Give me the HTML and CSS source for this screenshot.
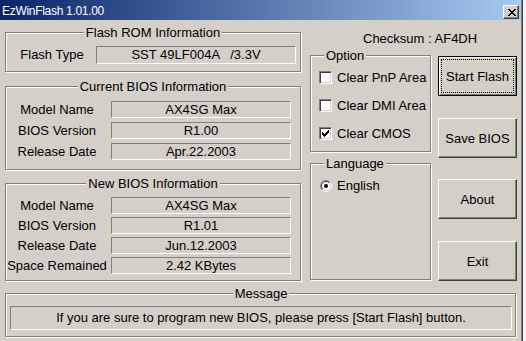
FILE: index.html
```html
<!DOCTYPE html>
<html>
<head>
<meta charset="utf-8">
<title>EzWinFlash 1.01.00</title>
<link rel="stylesheet" href="styles.css">
</head>
<body>
<div class="window">
  <div class="titlebar">
    <span class="title">EzWinFlash 1.01.00</span>
    <span class="close"><svg width="8" height="7" viewBox="0 0 8 7" shape-rendering="crispEdges"><path fill="#000" d="M0 0h2v1H0zM6 0h2v1H6zM1 1h2v1H1zM5 1h2v1H5zM2 2h4v1H2zM3 3h2v1H3zM2 4h4v1H2zM1 5h2v1H1zM5 5h2v1H5zM0 6h2v1H0zM6 6h2v1H6z"/></svg></span>
  </div>
  <div class="client">
    <div class="main">
      <div class="col-left">
        <div class="group g-rom">
          <div class="legend">Flash ROM Information</div>
          <div class="rom-row">
            <span class="rom-label">Flash Type</span>
            <span class="field rom-field">SST 49LF004A   /3.3V</span>
          </div>
        </div>
        <div class="group g-cur">
          <div class="legend">Current BIOS Information</div>
          <div class="info-grid">
            <span class="label">Model Name</span><span class="field">AX4SG Max</span>
            <span class="label">BIOS Version</span><span class="field">R1.00</span>
            <span class="label">Release Date</span><span class="field">Apr.22.2003</span>
          </div>
        </div>
        <div class="group g-new">
          <div class="legend">New BIOS Information</div>
          <div class="info-grid">
            <span class="label">Model Name</span><span class="field">AX4SG Max</span>
            <span class="label">BIOS Version</span><span class="field">R1.01</span>
            <span class="label">Release Date</span><span class="field">Jun.12.2003</span>
            <span class="label">Space Remained</span><span class="field">2.42 KBytes</span>
          </div>
        </div>
      </div>
      <div class="col-side">
        <div class="checksum">Checksum : AF4DH</div>
        <div class="side-row">
          <div class="col-mid">
            <div class="group g-opt">
              <div class="legend left">Option</div>
              <div class="checks">
                <div class="check-row"><span class="cbox"></span><span>Clear PnP Area</span></div>
                <div class="check-row"><span class="cbox"></span><span>Clear DMI Area</span></div>
                <div class="check-row"><span class="cbox"><svg width="7" height="7" viewBox="0 0 7 7" shape-rendering="crispEdges"><path fill="#000" d="M6 0h1v1H6zM5 1h2v1H5zM0 2h1v1H0zM4 2h3v1H4zM0 3h2v1H0zM3 3h3v1H3zM0 4h5v1H0zM1 5h3v1H1zM2 6h1v1H2z"/></svg></span><span>Clear CMOS</span></div>
              </div>
            </div>
            <div class="group g-lang">
              <div class="legend left">Language</div>
              <div class="check-row lang-row">
                <span class="radio"><svg width="12" height="12" viewBox="0 0 12 12">
                  <defs>
                    <clipPath id="tl"><polygon points="0,12 0,0 12,0"/></clipPath>
                    <clipPath id="br"><polygon points="12,0 12,12 0,12"/></clipPath>
                  </defs>
                  <circle cx="6" cy="6" r="5.5" fill="none" stroke="#808080" clip-path="url(#tl)"/>
                  <circle cx="6" cy="6" r="5.5" fill="none" stroke="#ffffff" clip-path="url(#br)"/>
                  <circle cx="6" cy="6" r="4.5" fill="#fff" stroke="#404040" clip-path="url(#tl)"/>
                  <circle cx="6" cy="6" r="4.5" fill="#fff" stroke="#d4d0c8" clip-path="url(#br)"/>
                  <circle cx="6" cy="6" r="2" fill="#000"/>
                </svg></span>
                <span>English</span>
              </div>
            </div>
          </div>
          <div class="col-btn">
            <div class="btn btn-default">Start Flash</div>
            <div class="btn btn-save">Save BIOS</div>
            <div class="btn btn-about">About</div>
            <div class="btn btn-exit">Exit</div>
          </div>
        </div>
      </div>
    </div>
    <div class="group g-msg">
      <div class="legend">Message</div>
      <div class="field msg-field">If you are sure to program new BIOS, please press [Start Flash] button.</div>
    </div>
  </div>
</div>
</body>
</html>
```
FILE: styles.css
```css
body {
  margin: 0;
  background: #f4f4f4;
  font-family: "Liberation Sans", Arial, sans-serif;
  font-size: 13px;
  color: #000;
}

.window {
  width: 521px;
  height: 341px;
  background: #d4d0c8;
  border-right: 1px solid #808080;
  box-shadow: 1px 0 0 #404040;
  overflow: hidden;
}

.titlebar {
  height: 20px;
  display: flex;
  background: linear-gradient(90deg, #0a246a, #a6caf0);
  color: #fff;
}

.title {
  font-size: 12px;
  line-height: 18px;
  padding: 2px 0 0 2px;
  letter-spacing: -0.3px;
  white-space: nowrap;
}

.close {
  margin: 5px 2px 0 auto;
  width: 16px;
  height: 14px;
  box-sizing: border-box;
  background: #d4d0c8;
  border: 1px solid;
  border-color: #fff #404040 #404040 #fff;
  box-shadow: inset -1px -1px 0 #808080;
  display: flex;
  align-items: center;
  justify-content: center;
}

.close svg {
  display: block;
  margin-left: 1px;
}

.client {
  padding-left: 5px;
}

.main {
  display: flex;
  gap: 9px;
}

.col-left {
  width: 296px;
  display: flex;
  flex-direction: column;
}

.group {
  box-sizing: border-box;
  border: 1px solid #808080;
  box-shadow: inset 1px 1px 0 #fff, 1px 1px 0 #fff;
}

.legend {
  display: table;
  margin: -7px auto -6px;
  padding: 0 2px;
  line-height: 13px;
  background: #d4d0c8;
  white-space: nowrap;
}

.legend.left {
  margin-left: 5px;
}

.field {
  box-sizing: border-box;
  border: 1px solid;
  border-color: #808080 #fff #fff #808080;
  text-align: center;
  white-space: pre;
  line-height: 15px;
}

.g-rom {
  margin-top: 12px;
  height: 40px;
}

.rom-row {
  display: flex;
  margin-top: 13px;
}

.rom-label {
  width: 88px;
  padding-left: 2px;
  text-align: center;
  line-height: 18px;
  white-space: nowrap;
}

.rom-field {
  width: 200px;
  height: 18px;
  line-height: 16px;
}

.info-grid {
  display: grid;
  grid-template-columns: 102px 180px;
  grid-auto-rows: 17px;
  column-gap: 3px;
  row-gap: 4px;
}

.label {
  text-align: center;
  line-height: 17px;
  white-space: nowrap;
}

.g-cur {
  margin-top: 14px;
  height: 84px;
}

.g-cur .info-grid {
  margin-top: 14px;
}

.g-new {
  margin-top: 13px;
  height: 98px;
}

.g-new .info-grid {
  margin-top: 13px;
  row-gap: 3px;
}

.col-side {
  width: 207px;
}

.checksum {
  padding: 11px 0 0 53px;
  line-height: 15px;
  white-space: nowrap;
}

.side-row {
  display: flex;
  gap: 7px;
}

.col-mid {
  width: 121px;
}

.g-opt {
  margin-top: 9px;
  height: 97px;
  padding-left: 8px;
}

.checks {
  display: flex;
  flex-direction: column;
  gap: 15px;
  margin-top: 15px;
}

.check-row {
  display: flex;
  align-items: center;
  gap: 5px;
  height: 13px;
  line-height: 13px;
  white-space: nowrap;
}

.cbox {
  flex: none;
  width: 13px;
  height: 13px;
  box-sizing: border-box;
  border: 1px solid;
  border-color: #808080 #fff #fff #808080;
  box-shadow: inset 1px 1px 0 #404040, inset -1px -1px 0 #d4d0c8;
  background: #fff;
}

.cbox svg {
  display: block;
  margin: 2px 0 0 2px;
}

.g-lang {
  margin-top: 11px;
  height: 117px;
  padding-left: 8px;
}

.lang-row {
  margin-top: 15px;
}

.radio {
  flex: none;
  width: 13px;
  height: 12px;
}

.radio svg {
  display: block;
  margin-left: 1px;
}

.col-btn {
  width: 79px;
  display: flex;
  flex-direction: column;
}

.btn {
  box-sizing: border-box;
  height: 40px;
  border: 1px solid;
  border-color: #fff #404040 #404040 #fff;
  box-shadow: inset -1px -1px 0 #808080;
  display: flex;
  align-items: center;
  justify-content: center;
  white-space: nowrap;
}

.btn-default {
  margin-top: 10px;
  border-color: #000;
  box-shadow: inset 1px 1px 0 #fff, inset -1px -1px 0 #808080;
  outline: 1px dotted #000;
  outline-offset: -4px;
}

.btn-save {
  margin-top: 22px;
}

.btn-about {
  margin-top: 21px;
}

.btn-exit {
  margin-top: 22px;
}

.g-msg {
  margin-top: 12px;
  width: 511px;
  height: 44px;
  padding: 0 3px 0 4px;
}

.msg-field {
  margin-top: 12px;
  height: 24px;
  line-height: 22px;
}
```
